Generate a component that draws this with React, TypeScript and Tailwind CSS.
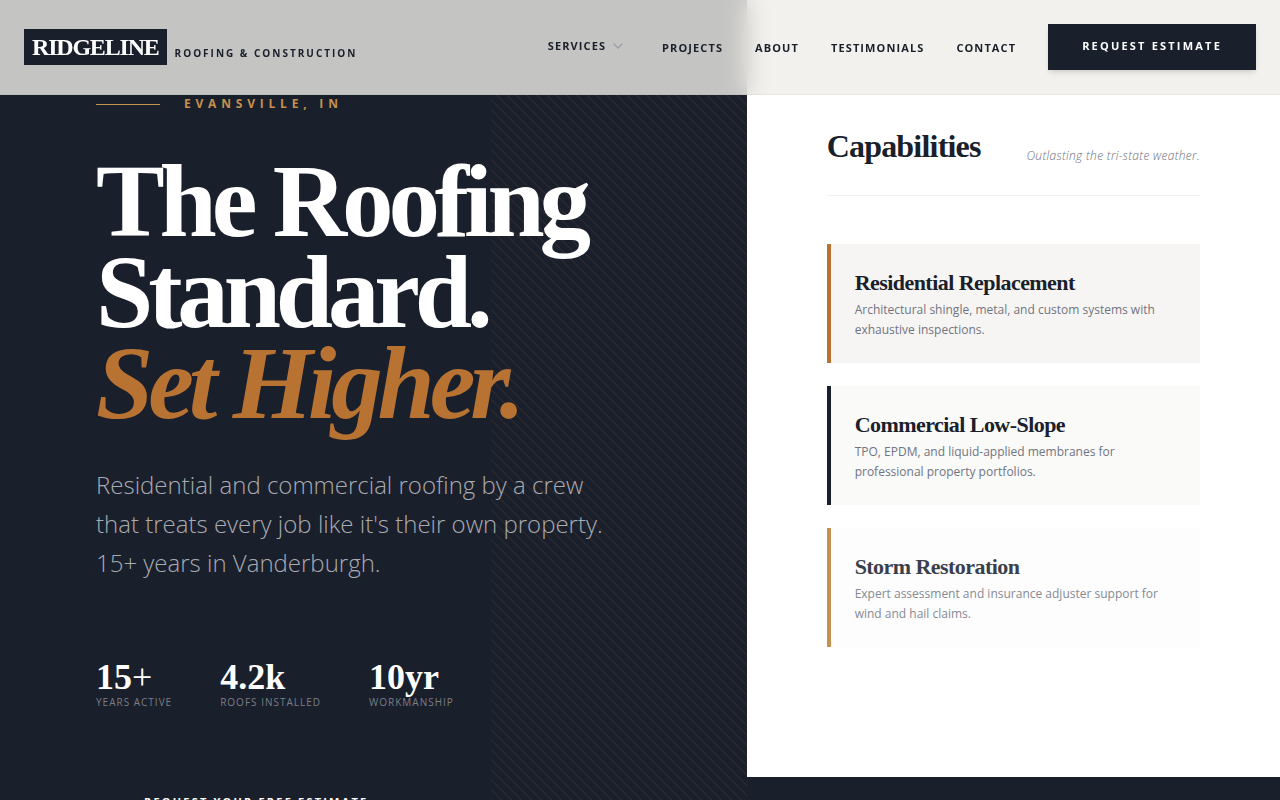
import { ChevronDown } from "lucide-react";

const links = ["Projects", "About", "Testimonials", "Contact"];

const stats = [
  { value: "15", suffix: "+", label: "Years Active" },
  { value: "4.2k", suffix: "", label: "Roofs Installed" },
  { value: "10yr", suffix: "", label: "Workmanship" },
];

const services = [
  {
    title: "Residential Replacement",
    text: "Architectural shingle, metal, and custom systems with exhaustive inspections.",
    card: "border-[#b87333] bg-[#f7f5f3]",
    heading: "text-[#1a1f2c]",
    body: "text-[#6f7482]",
  },
  {
    title: "Commercial Low-Slope",
    text: "TPO, EPDM, and liquid-applied membranes for professional property portfolios.",
    card: "border-[#1a1f2c] bg-[#fafaf8]",
    heading: "text-[#1a1f2c]",
    body: "text-[#6f7482]",
  },
  {
    title: "Storm Restoration",
    text: "Expert assessment and insurance adjuster support for wind and hail claims.",
    card: "border-[#c4924e] bg-[#fdfdfd]",
    heading: "text-[#3a3f4b]",
    body: "text-[#858994]",
  },
];

function Header() {
  return (
    <header className="fixed inset-x-0 top-0 z-10 flex items-center justify-between border-b border-[#1a1f2c]/5 bg-[#efede8]/80 px-6 py-6 backdrop-blur-md">
      <a href="#" className="flex items-end gap-2 text-[#1a1f2c]">
        <span className="bg-[#1a1f2c] px-2 font-['Liberation_Serif',serif] text-2xl leading-9 font-bold tracking-tighter text-white uppercase">
          Ridgeline
        </span>
        <span className="pb-1 text-[10px] leading-4 font-bold tracking-[0.2em] uppercase">
          Roofing &amp; Construction
        </span>
      </a>
      <nav className="flex items-center gap-8 text-[11px] leading-4 font-bold tracking-widest text-[#1a1f2c] uppercase">
        <button type="button" className="flex items-center gap-1 pr-1 pb-0.5 font-bold tracking-widest uppercase">
          Services
          <ChevronDown strokeWidth={2} className="size-4 text-[#9a9da5]" />
        </button>
        {links.map((link) => (
          <a key={link} href={"#" + link.toLowerCase()} className="pt-0.5">
            {link}
          </a>
        ))}
        <a href="#estimate" className="bg-[#1a1f2c] px-[34px] pt-[14px] pb-4 tracking-[0.2em] text-white shadow-md">
          Request Estimate
        </a>
      </nav>
    </header>
  );
}

function Hero() {
  return (
    <div className="relative px-24 pt-24 pb-24">
      <div className="absolute inset-y-0 right-0 w-64 bg-[repeating-linear-gradient(45deg,#b87333_0,#b87333_1px,transparent_0,transparent_50%)] bg-[size:10px_10px] opacity-10" />
      <div className="relative">
        <p className="flex items-center gap-6 text-[12px] leading-4 font-bold tracking-[0.4em] text-[#c4924e] uppercase">
          <span className="h-px w-16 bg-[#c4924e]" />
          Evansville, IN
        </p>
        <h1 className="mt-[44px] font-['Liberation_Serif',serif] text-[103px] leading-[91px] font-bold tracking-tighter text-white">
          The Roofing
          <br />
          Standard.
          <br />
          <em className="text-[#b87333]">Set Higher.</em>
        </h1>
        <p className="mt-9 max-w-lg text-2xl leading-[39px] font-light text-[#a9abb1]">
          Residential and commercial roofing by a crew that treats every job like it&apos;s their own property. 15+ years in
          Vanderburgh.
        </p>
        <dl className="mt-[78px] flex gap-12">
          {stats.map((stat) => (
            <div key={stat.label} className="flex flex-col-reverse">
              <dt className="text-[10px] leading-4 font-medium tracking-widest text-[#7b7e86] uppercase">{stat.label}</dt>
              <dd className="font-['Liberation_Serif',serif] text-4xl leading-[34px] font-bold text-white">
                {stat.value}
                {stat.suffix && <span className="font-normal">{stat.suffix}</span>}
              </dd>
            </div>
          ))}
        </dl>
        <a
          href="#estimate"
          className="mt-16 inline-block px-12 py-5 text-[11px] leading-4 font-bold tracking-[0.2em] text-white uppercase"
        >
          Request Your Free Estimate
        </a>
      </div>
    </div>
  );
}

function Capabilities() {
  return (
    <div className="self-start bg-white px-20 pt-32 pb-[130px]">
      <div className="flex items-end justify-between border-b border-[#f1f1f1] pb-[31px]">
        <h2 className="font-['Liberation_Serif',serif] text-[32px] leading-9 font-bold tracking-tight text-[#1a1f2c]">
          Capabilities
        </h2>
        <p className="text-[12px] leading-4 font-light tracking-wide text-[#6b6e79] italic">Outlasting the tri-state weather.</p>
      </div>
      <div className="mt-12 flex flex-col gap-[23px]">
        {services.map((service) => (
          <article key={service.title} className={"border-l-4 px-6 pt-[25px] pb-[23px] " + service.card}>
            <h3
              className={"font-['Liberation_Serif',serif] text-[22px] leading-7 font-bold tracking-tight " + service.heading}
            >
              {service.title}
            </h3>
            <p className={"mt-[3px] text-[12px] leading-5 " + service.body}>{service.text}</p>
          </article>
        ))}
      </div>
    </div>
  );
}

export default function App() {
  return (
    <div className="min-h-screen bg-[#1a1f2c] font-['Open_Sans',sans-serif]">
      <Header />
      <main className="grid grid-cols-[7fr_5fr]">
        <Hero />
        <Capabilities />
      </main>
    </div>
  );
}
